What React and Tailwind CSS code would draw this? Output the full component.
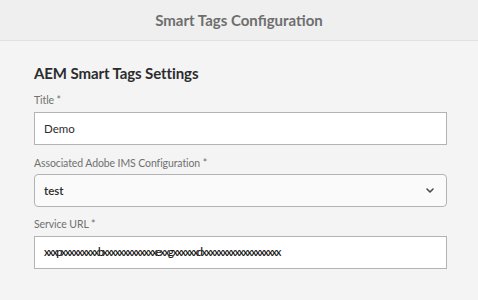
import React from "react";

export default function App() {
  const font = { fontFamily: 'Lato, "Open Sans", sans-serif' };
  return (
    <div className="w-[478px] h-[300px] bg-[#f4f4f4] overflow-hidden" style={font}>
      <div className="h-[41px] bg-[#efefef] border-b border-[#e1e1e1] flex items-center justify-center">
        <span className="text-[15px] font-bold text-[#6e6e6e]">Smart Tags Configuration</span>
      </div>
      <div className="px-[34px] pt-[21px]">
        <h1 className="text-[15px] font-bold text-[#2c2c2c] leading-[22px] tracking-[-0.1px]">AEM Smart Tags Settings</h1>
        <div className="mt-[9px] text-[10.5px] text-[#707070] leading-[14px] tracking-[-0.1px]">Title *</div>
        <div className="mt-[5px] h-[33px] w-[413px] bg-white border border-[#b3b3b3] flex items-center px-[9px]">
          <span className="text-[11.5px] text-[#2c2c2c]">Demo</span>
        </div>
        <div className="mt-[11px] text-[10.5px] text-[#707070] leading-[14px] tracking-[-0.1px]">Associated Adobe IMS Configuration *</div>
        <div className="mt-[4px] h-[33px] w-[413px] bg-[#fafafa] border border-[#b3b3b3] rounded-[4px] flex items-center justify-between pl-[9px] pr-[11px]">
          <span className="text-[11.5px] text-[#2c2c2c] font-semibold">test</span>
          <svg width="10" height="7" viewBox="0 0 10 7" fill="none">
            <path d="M2 2l3 3 3-3" stroke="#4b4b4b" strokeWidth="1.6" strokeLinecap="round" strokeLinejoin="round" />
          </svg>
        </div>
        <div className="mt-[10px] text-[10.5px] text-[#707070] leading-[14px] tracking-[-0.1px]">Service URL *</div>
        <div className="mt-[5px] h-[33px] w-[413px] bg-white border border-[#b3b3b3] flex items-center px-[9px]">
          <span className="text-[11px] text-[#1a1a1a] tracking-[-1.5px] font-semibold">xxxpxxxxxxxxxbxxxxxxxxxxxxxexxgxxxxxxdxxxxxxxxxxxxxxxxxxx</span>
        </div>
      </div>
    </div>
  );
}
